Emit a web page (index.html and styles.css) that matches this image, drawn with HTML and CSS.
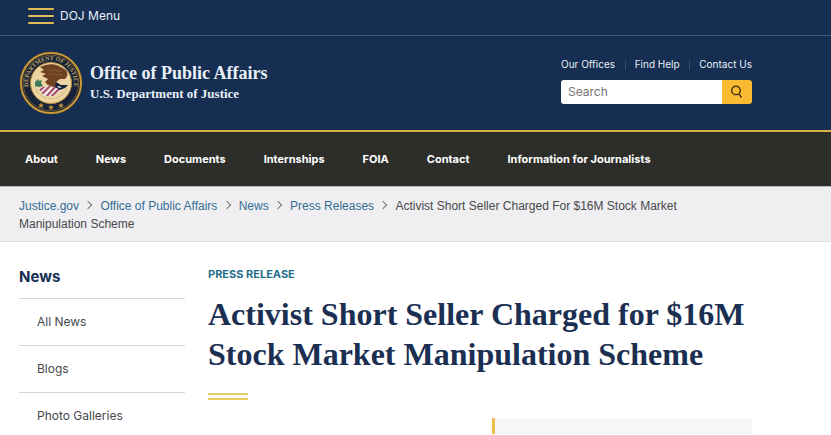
FILE: index.html
```
<!DOCTYPE html>
<html lang="en">
<head>
    <meta charset="UTF-8">
    <meta name="viewport" content="width=device-width, initial-scale=1">
    <title>Activist Short Seller Charged for $16M Stock Market Manipulation Scheme</title>
    <link rel="stylesheet" href="styles.css">
</head>
<body>
    <header>
        <div class="menu-bar">
            <button type="button" class="menu-button">
                <span class="bars"><span></span><span></span><span></span></span>
                DOJ Menu
            </button>
        </div>
        <div class="masthead">
            <a class="brand" href="#">
                <svg class="seal" viewBox="0 0 64 64" aria-hidden="true">
                    <defs>
                        <path id="ring" d="M13.3 45.1 A22.8 22.8 0 1 1 50.7 45.1"/>
                        <clipPath id="shield"><path d="M19 37 L37 34 L43 39 L34 45 L25 45 Z"/></clipPath>
                    </defs>
                    <circle cx="32" cy="32" r="31.5" fill="#4a3b22"/>
                    <circle cx="32" cy="32" r="30" fill="#17233a" stroke="#c99a3d" stroke-width="2"/>
                    <circle cx="32" cy="32" r="27.8" fill="none" stroke="#6b5429" stroke-width="1"/>
                    <text class="seal-text"><textPath href="#ring" startOffset="50%" text-anchor="middle">DEPARTMENT OF JUSTICE</textPath></text>
                    <circle cx="32" cy="32" r="20.5" fill="#ecd5a0" stroke="#b98a3c" stroke-width="1"/>
                    <path d="M16 36 A17 17 0 0 0 48 37" fill="none" stroke="#b89c70" stroke-width="1" stroke-dasharray="1 1"/>
                    <path d="M16 31 l3-3 1 2 3-1 -1 3 2 3 -4 1 -4-1z" fill="#3c7a58"/>
                    <g clip-path="url(#shield)">
                        <rect x="18" y="33" width="28" height="14" fill="#f3e6e2"/>
                        <path d="M18 42 l9-8 M22 44 l10-10 M27 46 l10-11 M32 46 l10-10" stroke="#a14a6b" stroke-width="2"/>
                    </g>
                    <path d="M21 16 C27 13 34 12 40 15 L47 19 C49 22 49 25 46 28 L41 28 L37 31 L39 34 L34 36 L29 34 L26 31 L29 28 L23 25 L27 23 L21 21 L25 19 Z" fill="#6e4223"/>
                    <path d="M28 19 L43 20 M29 23 L43 24" stroke="#875a35" stroke-width="1"/>
                    <path d="M37 31 L42 34 L49 34 L46 37 L41 39 L36 36 Z" fill="#17233a"/>
                    <path d="M38 35 l5 1 -3 1z" fill="#fff"/>
                    <g fill="#b98a3c">
                        <path id="star" d="M32 53.5 l.9 1.9 2 .2 -1.5 1.4 .5 2 -1.9-1 -1.9 1 .5-2 -1.5-1.4 2-.2z"/>
                        <use href="#star" x="-10" y="-2"/>
                        <use href="#star" x="10" y="-2"/>
                    </g>
                </svg>
                <span class="brand-name">
                    <span class="office">Office of Public Affairs</span>
                    <span class="department">U.S. Department of Justice</span>
                </span>
            </a>
            <div class="tools">
                <ul class="tool-links">
                    <li><a href="#">Our Offices</a></li>
                    <li><a href="#">Find Help</a></li>
                    <li><a href="#">Contact Us</a></li>
                </ul>
                <form class="search">
                    <input type="search" aria-label="Search" placeholder="Search">
                    <button type="submit" aria-label="Submit search">
                        <svg viewBox="0 0 14 14" aria-hidden="true">
                            <circle cx="6" cy="5.5" r="4.3"/>
                            <path d="M8.8 8.8 L11.6 12.6"/>
                        </svg>
                    </button>
                </form>
            </div>
        </div>
    </header>

    <nav class="main-nav">
        <a href="#">About</a>
        <a href="#">News</a>
        <a href="#">Documents</a>
        <a href="#">Internships</a>
        <a href="#">FOIA</a>
        <a href="#">Contact</a>
        <a href="#">Information for Journalists</a>
    </nav>

    <nav class="breadcrumb" aria-label="Breadcrumb">
        <ol>
            <li><a href="#">Justice.gov</a></li>
            <li><a href="#">Office of Public Affairs</a></li>
            <li><a href="#">News</a></li>
            <li><a href="#">Press Releases</a></li>
            <li>Activist Short Seller Charged For $16M Stock Market Manipulation Scheme</li>
        </ol>
    </nav>

    <div class="content">
        <aside>
            <h2>News</h2>
            <ul>
                <li><a href="#">All News</a></li>
                <li><a href="#">Blogs</a></li>
                <li><a href="#">Photo Galleries</a></li>
            </ul>
        </aside>
        <main>
            <p class="kicker">PRESS RELEASE</p>
            <h1>Activist Short Seller Charged for $16M Stock Market Manipulation Scheme</h1>
            <div class="rule"></div>
            <div class="info-box"></div>
        </main>
    </div>
</body>
</html>
```
FILE: styles.css
```
* {
    box-sizing: border-box;
}
body {
    margin: 0;
    font-family: Inter, "Liberation Sans", sans-serif;
    font-size: 12px;
    line-height: 18px;
    color: #46484b;
    background: #fff;
}
a {
    color: inherit;
    text-decoration: none;
}
a:hover {
    text-decoration: underline;
}
ul, ol {
    list-style: none;
    margin: 0;
    padding: 0;
}
button {
    border: 0;
    font: inherit;
    cursor: pointer;
}

/* header */
header {
    background: #162e51;
    color: #e8f0f8;
    border-bottom: 2px solid #d9ae45;
}
.menu-bar {
    height: 36px;
    padding: 7px 28px;
    border-bottom: 1px solid #3c5675;
}
.menu-button {
    display: flex;
    align-items: center;
    gap: 6px;
    padding: 0;
    background: none;
    color: inherit;
}
.bars {
    display: grid;
    gap: 5px;
    width: 26px;
}
.bars span {
    height: 2px;
    border-radius: 1px;
    background: #e0bb58;
}
.masthead {
    display: flex;
    justify-content: space-between;
    padding: 15px 79px 15px 19px;
}
.brand {
    display: flex;
    align-items: center;
    gap: 7px;
}
.seal {
    width: 64px;
    height: 64px;
}
.seal-text {
    font-family: "Liberation Serif", serif;
    font-size: 6px;
    font-weight: bold;
    fill: #c2a464;
}
.brand-name {
    display: grid;
    font-family: "Liberation Serif", serif;
    font-weight: bold;
}
.office {
    font-size: 18px;
    line-height: 22px;
}
.department {
    font-size: 13px;
    line-height: 20px;
}
.tools {
    width: 191px;
    padding-top: 5px;
}
.tool-links {
    display: flex;
    justify-content: space-between;
    font-size: 10px;
    line-height: 16px;
    white-space: nowrap;
}
.tool-links li + li::before {
    content: "";
    display: inline-block;
    height: 10px;
    margin-right: 9px;
    border-left: 1px solid #34506f;
    vertical-align: middle;
}
.search {
    display: flex;
    height: 24px;
    margin-top: 8px;
}
.search input {
    flex: 1;
    min-width: 0;
    padding: 0 7px;
    border: 0;
    border-radius: 3px 0 0 3px;
    background: #fff;
    font: inherit;
}
.search input::placeholder {
    color: #757575;
}
.search button {
    width: 30px;
    padding: 5px 8px;
    border-radius: 0 3px 3px 0;
    background: #fbbb30;
}
.search svg {
    display: block;
    width: 14px;
    height: 14px;
    fill: none;
    stroke: #4a3516;
    stroke-width: 1.5;
}

/* main navigation */
.main-nav {
    display: flex;
    flex-wrap: wrap;
    gap: 0 38px;
    padding: 18px 25px;
    background: #2d2e29;
    color: #fff;
    font-size: 11px;
    font-weight: bold;
}

/* breadcrumb */
.breadcrumb {
    padding: 10px 120px 8px 19px;
    border-top: 1px solid #b5b5b8;
    border-bottom: 1px solid #dfe1e2;
    background: #efeff1;
    font-family: "Liberation Sans", Arial, sans-serif;
}
.breadcrumb li {
    display: inline;
}
.breadcrumb li + li::before {
    content: "";
    display: inline-block;
    width: 5px;
    height: 5px;
    margin: 0 9px 2px 3px;
    border: solid #71767a;
    border-width: 1px 1px 0 0;
    transform: rotate(45deg);
}
.breadcrumb a {
    color: #346e94;
}

/* page content */
.content {
    display: grid;
    grid-template-columns: 166px 1fr;
    gap: 23px;
    padding: 23px 79px 0 19px;
}
aside h2 {
    margin: 0;
    padding: 2px 0 11px;
    font-size: 15px;
    line-height: 20px;
    color: #162e51;
}
aside li {
    padding: 14px 18px;
    border-top: 1px solid #d3d7da;
}
.kicker {
    margin: 0;
    font-size: 11px;
    font-weight: bold;
    color: #1f6f8b;
}
h1 {
    margin: 11px 0 19px;
    font-family: "Liberation Serif", serif;
    font-size: 32px;
    line-height: 40px;
    color: #1b2f52;
}
.rule {
    width: 40px;
    height: 7px;
    border: solid #e8cf63;
    border-width: 2px 0;
}
.info-box {
    width: 260px;
    height: 16px;
    margin: 18px 0 1px auto;
    border-left: 3px solid #edbb50;
    background: #f6f6f4;
}
```
